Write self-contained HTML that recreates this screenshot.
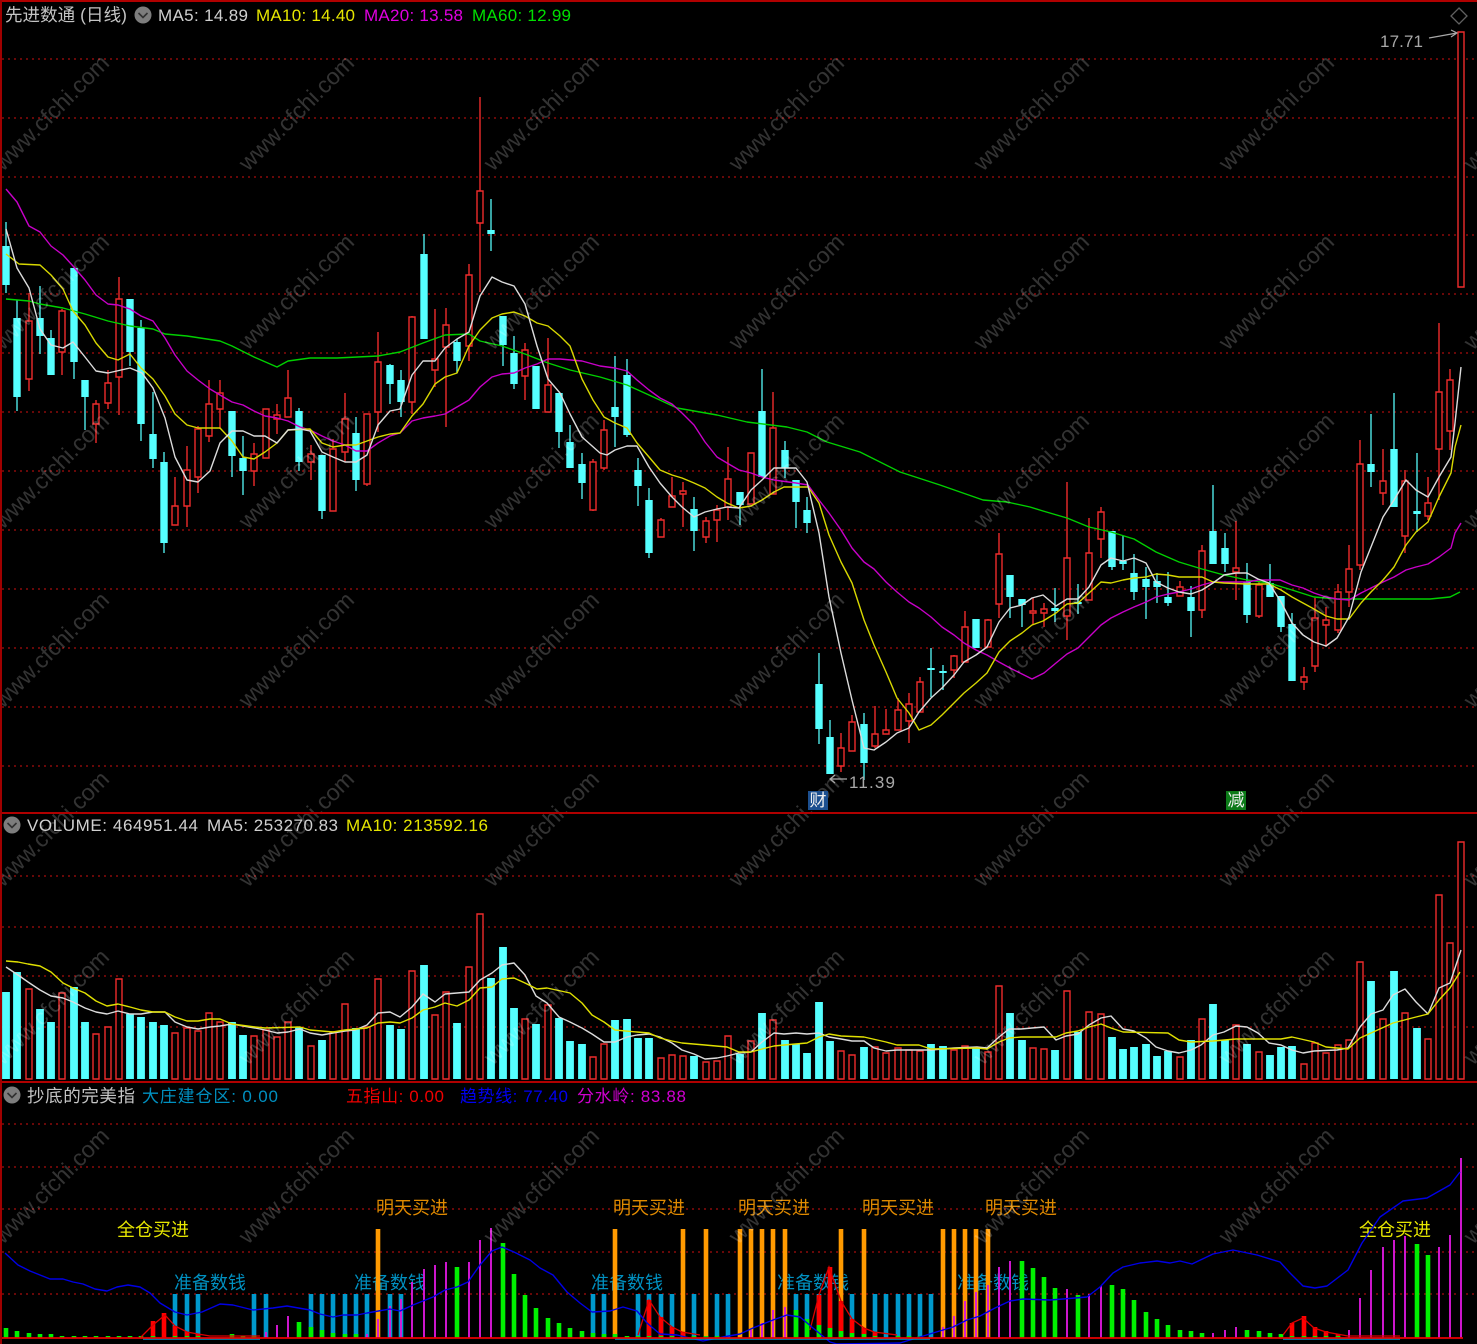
<!DOCTYPE html>
<html><head><meta charset="utf-8"><title>先进数通</title>
<style>html,body{margin:0;padding:0;background:#000;width:1477px;height:1344px;overflow:hidden}svg{display:block}
text{font-family:"Liberation Sans","Noto Sans CJK SC",sans-serif}
.g{stroke:#8a0a0a;stroke-width:1.4;stroke-dasharray:2 4;fill:none}
.l{fill:none;stroke-linejoin:round;stroke-width:1.4}
.wm text{font-size:23px;fill:rgba(255,255,255,.2)}
</style></head><body>
<svg width="1477" height="1344" viewBox="0 0 1477 1344" xmlns="http://www.w3.org/2000/svg">
<rect width="1477" height="1344" fill="#000"/>
<path class="g" d="M2 59H1477M2 118H1477M2 177H1477M2 235H1477M2 294H1477M2 353H1477M2 412H1477M2 471H1477M2 530H1477M2 589H1477M2 648H1477M2 707H1477M2 766H1477M2 876H1477M2 927H1477M2 976H1477M2 1027H1477M2 1124H1477M2 1167H1477M2 1209H1477M2 1252H1477M2 1294H1477"/>

<!-- cyan candles -->
<path fill="none" stroke="#4fe8e8" stroke-width="1.4" d="M6 222V293M17 300V411M40 286V354M51 330V375M74 268V379M85 380V430M130 299V366M141 320V441M153 392V468M164 452V553M232 411V477M243 436V495M299 408V471M322 455V519M356 417V491M390 364V404M401 370V417M424 234V339M457 339V373M491 199V251M503 316V366M514 336V389M536 366V409M559 393V448M570 425V468M582 453V499M615 356V447M627 359V437M638 458V506M649 488V558M694 497V551M740 492V525M762 369V477M785 441V478M796 480V528M807 497V533M819 653V744M830 720V774M864 713V780M931 648V697M943 665V690M976 619V648M1010 575V618M1022 599V627M1055 588V622M1078 584V614M1112 531V570M1123 536V570M1134 554V600M1146 567V619M1157 573V603M1168 572V606M1191 586V637M1213 485V564M1225 533V572M1247 563V623M1270 564V597M1281 596V632M1292 613V681M1371 414V487M1394 393V507M1417 453V532"/>
<path fill="none" stroke="#55ffff" stroke-width="7.4" d="M6 246V285M17 318V397M40 318V336M51 338V375M74 268V362M85 380V397M130 299V352M141 328V424M153 434V459M164 462V543M232 411V456M243 458V471M299 411V462M322 455V511M356 433V480M390 365V384M401 380V402M424 254V339M457 342V361M491 230V234M503 316V345M514 353V384M536 366V409M559 393V432M570 442V468M582 464V483M615 407V417M627 375V435M638 470V486M649 500V553M694 509V531M740 492V505M762 411V477M785 450V468M796 480V502M807 510V523M819 684V729M830 737V774M864 724V763M931 668V670M943 671V673M976 619V648M1010 575V597M1022 599V605M1055 608V611M1078 602V604M1112 531V567M1123 561V564M1134 573V592M1146 579V587M1157 581V587M1168 597V603M1191 597V611M1213 531V564M1225 548V564M1247 582V615M1270 583V597M1281 596V627M1292 624V681M1371 464V472M1394 449V507M1417 511V514"/>
<!-- red candles -->
<path fill="none" stroke="#ee2c2c" stroke-width="1.4" d="M29 293V391M62 309V375M96 400V443M108 370V409M119 277V415M175 477V525M187 446V527M198 426V493M209 380V442M220 380V429M254 443V486M266 409V458M277 404V434M288 370V417M311 445V480M333 439V511M345 393V462M367 414V486M378 332V432M412 316V414M435 309V387M446 308V427M469 264V361M480 97V292M525 343V400M548 338V412M593 459V511M604 420V470M661 518V537M672 477V507M683 482V527M706 517V543M717 505V542M728 447V520M751 453V504M773 392V494M841 733V772M852 715V751M875 706V748M886 709V734M898 698V730M909 693V743M920 677V712M954 655V678M965 611V662M988 619V647M999 533V618M1033 598V625M1044 603V627M1067 482V640M1089 518V600M1101 507V558M1180 581V596M1202 545V618M1236 521V600M1259 582V618M1304 667V690M1315 598V672M1326 607V647M1338 584V633M1349 545V607M1360 440V570M1383 449V505M1405 470V553M1428 477V520M1439 323V500M1450 369V450M1461 32V287"/>
<path fill="#000" stroke="#ee2c2c" stroke-width="1.4" d="M29 321m-3 0h6V379h-6zM62 311m-3 0h6V352h-6zM96 404m-3 0h6V424h-6zM108 383m-3 0h6V403h-6zM119 299m-3 0h6V377h-6zM175 506m-3 0h6V525h-6zM187 470m-3 0h6V506h-6zM198 429m-3 0h6V477h-6zM209 404m-3 0h6V436h-6zM220 393m-3 0h6V409h-6zM254 454m-3 0h6V471h-6zM266 409m-3 0h6V458h-6zM277 415m-3 0h6V419h-6zM288 398m-3 0h6V417h-6zM311 454m-3 0h6V462h-6zM333 449m-3 0h6V511h-6zM345 419m-3 0h6V452h-6zM367 414m-3 0h6V484h-6zM378 362m-3 0h6V412h-6zM412 317m-3 0h6V402h-6zM435 359m-3 0h6V370h-6zM446 325m-3 0h6V347h-6zM469 275m-3 0h6V346h-6zM480 191m-3 0h6V223h-6zM525 350m-3 0h6V376h-6zM548 385m-3 0h6V412h-6zM593 462m-3 0h6V510h-6zM604 430m-3 0h6V468h-6zM661 520m-3 0h6V537h-6zM672 496m-3 0h6V507h-6zM683 491m-3 0h6V494h-6zM706 521m-3 0h6V537h-6zM717 510m-3 0h6V520h-6zM728 479m-3 0h6V507h-6zM751 453m-3 0h6V504h-6zM773 428m-3 0h6V494h-6zM841 748m-3 0h6V766h-6zM852 722m-3 0h6V751h-6zM875 734m-3 0h6V746h-6zM886 730m-3 0h6V734h-6zM898 710m-3 0h6V730h-6zM909 704m-3 0h6V721h-6zM920 682m-3 0h6V712h-6zM954 656m-3 0h6V670h-6zM965 627m-3 0h6V662h-6zM988 620m-3 0h6V647h-6zM999 554m-3 0h6V604h-6zM1033 611m-3 0h6V613h-6zM1044 609m-3 0h6V613h-6zM1067 558m-3 0h6V616h-6zM1089 553m-3 0h6V600h-6zM1101 512m-3 0h6V539h-6zM1180 587m-3 0h6V596h-6zM1202 551m-3 0h6V610h-6zM1236 568m-3 0h6V572h-6zM1259 585m-3 0h6V616h-6zM1304 677m-3 0h6V682h-6zM1315 618m-3 0h6V666h-6zM1326 620m-3 0h6V625h-6zM1338 592m-3 0h6V630h-6zM1349 569m-3 0h6V592h-6zM1360 464m-3 0h6V565h-6zM1383 481m-3 0h6V493h-6zM1405 481m-3 0h6V536h-6zM1428 503m-3 0h6V516h-6zM1439 392m-3 0h6V449h-6zM1450 380m-3 0h6V431h-6zM1461 32m-3 0h6V287h-6z"/>

<!-- MA lines main -->
<polyline class="l" stroke="#00d000" points="6,299 29,301 40,304 63,308 85,314 108,321 130,326 153,329 165,334 187,336 220,341 232,346 254,357 277,367 288,361 310,358 337,358 378,356 400,352 423,343 445,335 469,334 480,341 502,346 525,354 548,363 570,370 600,377 627,385 649,395 677,408 717,415 747,422 787,427 807,432 827,442 860,452 900,472 940,485 983,500 1007,502 1030,507 1043,511 1067,518 1089,527 1111,532 1134,539 1156,552 1179,562 1202,569 1224,575 1247,580 1269,583 1292,590 1314,597 1337,599 1430,599 1450,597 1460,592"/>
<polyline class="l" stroke="#c800c8" points="6,189 17,202 29,226 40,232 51,246 63,255 73,266 85,280 96,295 108,304 118,305 130,309 141,316 153,321 165,338 175,355 187,371 198,380 210,389 220,395 232,402 243,405 254,411 265,416 277,418 288,421 300,427 310,430 322,436 333,441 345,445 356,451 367,451 378,443 390,436 400,433 412,421 423,418 435,416 445,414 457,407 469,400 480,387 492,377 502,374 514,373 525,368 537,364 548,359 560,359 582,361 600,366 615,368 627,371 637,380 649,390 660,398 672,404 682,413 694,425 705,442 717,457 727,463 739,470 751,473 762,477 774,480 796,483 808,485 819,500 829,513 841,530 852,548 864,562 874,569 886,582 897,592 909,602 919,608 931,617 942,627 954,635 964,643 976,650 987,655 999,662 1010,668 1022,674 1032,679 1044,673 1056,663 1067,654 1078,648 1089,637 1101,625 1111,618 1123,612 1134,607 1146,602 1156,597 1168,594 1179,592 1191,589 1202,585 1213,582 1224,582 1247,582 1258,580 1280,580 1292,585 1303,588 1314,593 1326,597 1337,599 1349,600 1361,593 1371,588 1383,582 1394,577 1406,570 1416,567 1428,564 1439,557 1451,548 1455,533 1461,523"/>
<polyline class="l" stroke="#d8d800" points="6,254 19,264 40,265 51,275 63,289 73,311 85,325 96,343 108,357 118,360 130,354 141,368 153,379 165,396 175,414 187,425 198,428 220,428 232,441 243,457 254,459 265,452 277,443 288,430 310,429 322,443 333,447 345,445 356,445 367,441 378,437 390,434 400,433 412,416 423,404 435,384 445,377 457,373 469,346 480,330 492,318 502,314 514,312 525,316 537,323 548,326 560,336 570,346 582,379 593,400 604,417 615,423 627,428 637,443 649,457 660,470 672,475 682,478 694,483 705,488 717,497 727,503 739,508 751,506 762,500 774,492 784,487 796,487 808,487 819,503 829,535 841,562 852,583 864,620 874,645 886,672 897,698 909,713 919,730 931,725 942,715 954,703 964,693 976,683 987,673 999,652 1010,641 1022,633 1032,625 1043,621 1056,613 1067,604 1078,603 1089,593 1101,582 1111,583 1123,580 1134,578 1146,577 1156,574 1168,575 1179,577 1202,577 1213,582 1224,583 1247,584 1269,584 1281,590 1292,597 1303,603 1314,609 1326,616 1337,619 1349,619 1361,603 1371,592 1383,580 1394,567 1406,545 1416,532 1428,522 1439,497 1451,473 1455,447 1461,425"/>
<polyline class="l" stroke="#dcdcdc" points="6,229 17,268 29,288 40,329 51,345 63,348 73,342 85,357 96,371 108,373 130,368 142,373 153,388 165,418 175,457 187,480 198,482 210,471 220,443 232,431 243,431 254,436 265,436 277,443 288,430 300,429 310,431 322,452 333,457 345,462 356,462 367,455 378,425 390,411 400,409 412,375 423,361 435,361 445,348 457,339 469,332 480,296 492,277 502,282 514,286 525,304 537,346 548,379 560,393 570,414 582,437 600,453 607,455 615,450 627,446 637,446 649,467 660,483 672,497 682,507 694,517 705,512 717,509 727,507 739,508 751,490 762,480 774,468 784,468 796,468 807,482 819,533 829,597 841,653 852,700 864,748 874,750 886,742 897,733 909,728 919,712 931,698 942,688 954,675 964,662 976,655 987,647 999,622 1010,608 1022,605 1032,598 1043,595 1056,606 1067,599 1078,599 1089,587 1101,565 1111,558 1123,561 1134,558 1146,563 1156,582 1168,588 1179,592 1191,594 1202,590 1213,583 1224,575 1236,573 1247,573 1258,579 1269,583 1281,602 1292,623 1303,635 1314,642 1326,646 1337,638 1349,617 1361,572 1371,547 1383,517 1394,500 1406,480 1416,490 1428,497 1439,477 1451,457 1455,423 1461,367"/>

<!-- Volume bars -->
<path fill="none" stroke="#55ffff" stroke-width="7.8" d="M6 992V1079M17 972V1079M40 1009V1079M51 1022V1079M74 987V1079M85 1022V1079M130 1014V1079M141 1017V1079M153 1022V1079M164 1025V1079M232 1022V1079M243 1035V1079M299 1027V1079M322 1040V1079M356 1028V1079M390 1025V1079M401 1029V1079M424 965V1079M457 1023V1079M491 978V1079M503 947V1079M514 1008V1079M536 1024V1079M559 1018V1079M570 1041V1079M582 1044V1079M615 1020V1079M627 1019V1079M638 1038V1079M649 1038V1079M694 1056V1079M740 1054V1079M762 1013V1079M785 1040V1079M796 1044V1079M807 1053V1079M819 1002V1079M830 1041V1079M864 1047V1079M931 1044V1079M943 1046V1079M976 1047V1079M1010 1013V1079M1022 1040V1079M1055 1050V1079M1078 1032V1079M1112 1037V1079M1123 1049V1079M1134 1047V1079M1146 1044V1079M1157 1056V1079M1168 1051V1079M1191 1040V1079M1213 1004V1079M1225 1040V1079M1247 1044V1079M1270 1055V1079M1281 1047V1079M1292 1046V1079M1371 981V1079M1394 971V1079M1417 1028V1079"/>
<path fill="#000" stroke="#ee2c2c" stroke-width="1.4" d="M29 989m-3 0h6V1079h-6zM62 993m-3 0h6V1079h-6zM96 1034m-3 0h6V1079h-6zM108 1027m-3 0h6V1079h-6zM119 979m-3 0h6V1079h-6zM175 1033m-3 0h6V1079h-6zM187 1028m-3 0h6V1079h-6zM198 1031m-3 0h6V1079h-6zM209 1013m-3 0h6V1079h-6zM220 1022m-3 0h6V1079h-6zM254 1036m-3 0h6V1079h-6zM266 1030m-3 0h6V1079h-6zM277 1037m-3 0h6V1079h-6zM288 1022m-3 0h6V1079h-6zM311 1046m-3 0h6V1079h-6zM333 1032m-3 0h6V1079h-6zM345 1004m-3 0h6V1079h-6zM367 1027m-3 0h6V1079h-6zM378 979m-3 0h6V1079h-6zM412 971m-3 0h6V1079h-6zM435 1015m-3 0h6V1079h-6zM446 992m-3 0h6V1079h-6zM469 967m-3 0h6V1079h-6zM480 914m-3 0h6V1079h-6zM525 1019m-3 0h6V1079h-6zM548 1005m-3 0h6V1079h-6zM593 1057m-3 0h6V1079h-6zM604 1044m-3 0h6V1079h-6zM661 1058m-3 0h6V1079h-6zM672 1055m-3 0h6V1079h-6zM683 1056m-3 0h6V1079h-6zM706 1062m-3 0h6V1079h-6zM717 1061m-3 0h6V1079h-6zM728 1036m-3 0h6V1079h-6zM751 1041m-3 0h6V1079h-6zM773 1020m-3 0h6V1079h-6zM841 1051m-3 0h6V1079h-6zM852 1055m-3 0h6V1079h-6zM875 1047m-3 0h6V1079h-6zM886 1053m-3 0h6V1079h-6zM898 1048m-3 0h6V1079h-6zM909 1050m-3 0h6V1079h-6zM920 1051m-3 0h6V1079h-6zM954 1050m-3 0h6V1079h-6zM965 1046m-3 0h6V1079h-6zM988 1052m-3 0h6V1079h-6zM999 986m-3 0h6V1079h-6zM1033 1048m-3 0h6V1079h-6zM1044 1049m-3 0h6V1079h-6zM1067 991m-3 0h6V1079h-6zM1089 1012m-3 0h6V1079h-6zM1101 1014m-3 0h6V1079h-6zM1180 1057m-3 0h6V1079h-6zM1202 1019m-3 0h6V1079h-6zM1236 1025m-3 0h6V1079h-6zM1259 1052m-3 0h6V1079h-6zM1304 1064m-3 0h6V1079h-6zM1315 1043m-3 0h6V1079h-6zM1326 1053m-3 0h6V1079h-6zM1338 1045m-3 0h6V1079h-6zM1349 1040m-3 0h6V1079h-6zM1360 962m-3 0h6V1079h-6zM1383 1019m-3 0h6V1079h-6zM1405 1013m-3 0h6V1079h-6zM1428 1039m-3 0h6V1079h-6zM1439 895m-3 0h6V1079h-6zM1450 943m-3 0h6V1079h-6zM1461 842m-3 0h6V1079h-6z"/>
<polyline class="l" stroke="#dcdcdc" points="6,967 18,975 28,982 40,990 51,996 63,998 73,1002 85,1008 96,1012 107,1014 118,1011 130,1014 141,1014 153,1012 165,1012 175,1022 187,1027 198,1029 210,1027 220,1026 232,1024 243,1026 255,1028 265,1030 277,1033 288,1032 300,1029 310,1033 322,1035 333,1033 345,1031 355,1030 367,1025 378,1013 390,1012 400,1017 412,1007 423,994 435,1002 445,994 457,993 469,992 480,980 492,973 502,965 514,963 525,975 536,996 547,1003 559,1017 570,1022 582,1028 592,1034 604,1042 615,1042 627,1037 637,1035 649,1034 660,1037 672,1043 682,1050 694,1054 705,1059 717,1058 727,1056 739,1053 751,1052 762,1042 774,1033 784,1034 796,1033 807,1034 819,1033 829,1037 841,1039 852,1041 864,1041 874,1048 886,1051 897,1050 909,1050 931,1050 954,1048 977,1047 987,1048 999,1037 1009,1029 1021,1029 1032,1028 1044,1027 1056,1040 1066,1036 1078,1034 1089,1025 1101,1018 1111,1016 1123,1029 1134,1031 1146,1038 1156,1047 1168,1051 1179,1053 1191,1050 1201,1045 1213,1035 1224,1032 1236,1026 1247,1027 1258,1033 1269,1043 1281,1045 1292,1050 1303,1053 1314,1051 1337,1050 1348,1048 1360,1027 1371,1014 1383,1010 1393,995 1405,989 1416,1002 1428,1014 1439,988 1450,983 1461,950"/>
<polyline class="l" stroke="#e0e000" points="6,961 18,962 28,964 40,966 51,972 63,983 73,988 85,993 96,1001 107,1006 118,1004 130,1007 141,1010 153,1012 165,1012 175,1017 187,1021 198,1021 210,1019 220,1019 232,1024 255,1027 265,1028 300,1027 310,1030 333,1032 345,1030 367,1028 378,1023 390,1022 400,1023 412,1018 423,1010 435,1007 445,1003 457,1006 469,1000 480,988 492,987 502,979 514,978 525,983 537,989 547,988 570,993 582,1003 592,1015 604,1022 615,1030 637,1032 649,1033 660,1038 672,1041 682,1043 705,1045 727,1047 739,1052 751,1052 762,1049 774,1046 784,1045 807,1043 819,1037 829,1034 841,1036 864,1037 886,1042 897,1045 919,1045 931,1049 977,1048 987,1049 999,1042 1009,1038 1021,1037 1056,1037 1066,1033 1078,1031 1089,1027 1101,1024 1111,1028 1123,1032 1168,1033 1179,1040 1191,1042 1213,1041 1236,1039 1281,1039 1292,1037 1314,1042 1326,1047 1348,1049 1360,1038 1371,1033 1393,1023 1416,1017 1428,1014 1439,1000 1450,988 1460,972"/>

<!-- Indicator labels -->
<g font-size="18">
<text x="117" y="1236" fill="#e6e600" textLength="72">全仓买进</text>
<text x="1359" y="1236" fill="#e6e600" textLength="72">全仓买进</text>
<text x="376" y="1214" fill="#e08a00" textLength="72">明天买进</text>
<text x="613" y="1214" fill="#e08a00" textLength="72">明天买进</text>
<text x="738" y="1214" fill="#e08a00" textLength="72">明天买进</text>
<text x="862" y="1214" fill="#e08a00" textLength="72">明天买进</text>
<text x="985" y="1214" fill="#e08a00" textLength="72">明天买进</text>
<text x="174" y="1289" fill="#0090c0" textLength="72">准备数钱</text>
<text x="354" y="1289" fill="#0090c0" textLength="72">准备数钱</text>
<text x="591" y="1289" fill="#0090c0" textLength="72">准备数钱</text>
<text x="777" y="1289" fill="#0090c0" textLength="72">准备数钱</text>
<text x="957" y="1289" fill="#0090c0" textLength="72">准备数钱</text>
</g>
<!-- Indicator bars -->
<path fill="none" stroke="#0099cc" stroke-width="4.6" d="M175 1294V1338M187 1294V1338M198 1294V1338M254 1294V1338M266 1294V1338M311 1294V1338M322 1294V1338M333 1294V1338M345 1294V1338M356 1294V1338M367 1294V1338M390 1294V1338M401 1294V1338M593 1294V1338M604 1294V1338M638 1294V1338M649 1294V1338M661 1294V1338M672 1294V1338M694 1294V1338M717 1294V1338M728 1294V1338M796 1294V1338M807 1294V1338M819 1294V1338M830 1294V1338M852 1294V1338M875 1294V1338M886 1294V1338M898 1294V1338M909 1294V1338M920 1294V1338M931 1294V1338"/>
<path fill="none" stroke="#ff9a00" stroke-width="4.6" d="M378 1229V1338M615 1229V1338M683 1229V1338M706 1229V1338M740 1229V1338M751 1229V1338M762 1229V1338M773 1229V1338M785 1229V1338M841 1229V1338M864 1229V1338M943 1229V1338M954 1229V1338M965 1229V1338M976 1229V1338M988 1229V1338"/>
<path fill="none" stroke="#d818d8" stroke-width="1.9" d="M266 1332V1338M277 1325V1338M288 1316V1338M367 1334V1338M378 1319V1338M390 1306V1338M401 1299V1338M412 1282V1338M424 1269V1338M435 1265V1338M446 1262V1338M469 1262V1338M480 1240V1338M491 1228V1338M751 1330V1338M762 1323V1338M773 1310V1338M785 1307V1338M943 1327V1338M954 1316V1338M965 1301V1338M976 1292V1338M988 1285V1338M999 1267V1338M1010 1261V1338M1067 1289V1338M1089 1294V1338M1101 1286V1338M1213 1333V1338M1225 1330V1338M1236 1327V1338M1349 1330V1338M1360 1298V1338M1371 1270V1338M1383 1247V1338M1394 1240V1338M1405 1236V1338M1439 1247V1338M1450 1235V1338M1461 1158V1338"/>
<path fill="none" stroke="#ff0000" stroke-width="4.6" d="M153 1321V1338M164 1313V1338M175 1326V1338M187 1332V1338M198 1334V1338M649 1300V1338M661 1317V1338M672 1327V1338M683 1332V1338M819 1295V1338M830 1267V1338M841 1301V1338M852 1319V1338M864 1328V1338M875 1332V1338M1292 1323V1338M1304 1316V1338M1315 1327V1338M1326 1331V1338M1338 1334V1338"/>
<path fill="none" stroke="#00f000" stroke-width="4.6" d="M6 1328V1338M17 1331V1338M29 1333V1338M40 1334V1338M51 1334V1338M62 1336V1338M74 1336V1338M85 1336V1338M96 1336V1338M108 1336V1338M119 1336V1338M130 1336V1338M141 1336V1338M153 1336V1338M175 1336V1338M187 1336V1338M198 1336V1338M232 1334V1338M243 1336V1338M254 1336V1338M299 1322V1338M311 1327V1338M322 1330V1338M333 1333V1338M345 1334V1338M356 1334V1338M457 1267V1338M503 1243V1338M514 1274V1338M525 1295V1338M536 1308V1338M548 1318V1338M559 1323V1338M570 1328V1338M582 1331V1338M593 1333V1338M604 1334V1338M615 1334V1338M627 1336V1338M638 1336V1338M649 1336V1338M661 1336V1338M672 1336V1338M683 1336V1338M694 1336V1338M706 1336V1338M717 1336V1338M796 1310V1338M807 1319V1338M819 1325V1338M830 1328V1338M841 1331V1338M852 1333V1338M864 1334V1338M875 1336V1338M898 1336V1338M909 1336V1338M920 1336V1338M1022 1261V1338M1033 1268V1338M1044 1277V1338M1055 1288V1338M1078 1295V1338M1112 1285V1338M1123 1289V1338M1134 1300V1338M1146 1312V1338M1157 1319V1338M1168 1325V1338M1180 1330V1338M1191 1331V1338M1202 1333V1338M1247 1330V1338M1259 1331V1338M1270 1333V1338M1281 1334V1338M1292 1336V1338M1304 1336V1338M1315 1336V1338M1326 1336V1338M1338 1336V1338M1417 1244V1338M1428 1255V1338"/>
<path fill="none" stroke="#dd0000" stroke-width="1.3" d="M141 1337L153 1325L165 1315L175 1326L187 1332L198 1334L210 1336H260M638 1335L649 1300L660 1317L672 1327L682 1332L700 1335M810 1330L819 1295L829 1267L841 1301L852 1319L864 1328L874 1332L897 1335M1283 1335L1292 1323L1303 1318L1314 1328L1326 1332L1337 1334L1348 1336H1400"/>
<polyline class="l" stroke="#0000e6" points="5,1253 18,1265 30,1271 50,1279 63,1279 73,1282 83,1284 95,1289 107,1291 117,1287 128,1285 140,1287 150,1293 160,1303 175,1312 187,1315 202,1312 220,1304 233,1305 253,1310 273,1308 287,1306 310,1310 320,1314 333,1317 343,1315 357,1315 367,1313 390,1309 400,1311 413,1305 433,1297 445,1290 457,1287 468,1282 480,1265 492,1251 502,1247 514,1252 530,1260 540,1268 553,1275 567,1292 580,1303 592,1312 610,1311 623,1307 637,1311 647,1323 660,1334 677,1335 703,1341 723,1337 740,1334 753,1328 773,1320 787,1315 800,1317 813,1328 830,1342 837,1344 900,1343 920,1337 933,1333 953,1327 967,1320 980,1316 995,1308 1010,1301 1023,1299 1050,1300 1063,1299 1087,1297 1100,1287 1113,1273 1123,1267 1140,1263 1157,1261 1170,1263 1180,1261 1192,1264 1213,1254 1233,1250 1257,1255 1280,1262 1290,1273 1303,1286 1315,1288 1327,1286 1348,1270 1362,1243 1380,1217 1403,1201 1427,1198 1450,1185 1460,1172"/>
<path fill="none" stroke="#0099cc" stroke-width="1.4" d="M143 1339H260M615 1339H930M1283 1339H1400"/>
<path fill="none" stroke="#e80000" stroke-width="1.8" d="M2 1338H1463"/>

<!-- Watermark -->
<g class="wm">
<text transform="translate(3,172) rotate(-45)">www.cfchi.com</text><text transform="translate(248,172) rotate(-45)">www.cfchi.com</text><text transform="translate(493,172) rotate(-45)">www.cfchi.com</text><text transform="translate(738,172) rotate(-45)">www.cfchi.com</text><text transform="translate(983,172) rotate(-45)">www.cfchi.com</text><text transform="translate(1228,172) rotate(-45)">www.cfchi.com</text><text transform="translate(1473,172) rotate(-45)">www.cfchi.com</text>
<text transform="translate(3,351) rotate(-45)">www.cfchi.com</text><text transform="translate(248,351) rotate(-45)">www.cfchi.com</text><text transform="translate(493,351) rotate(-45)">www.cfchi.com</text><text transform="translate(738,351) rotate(-45)">www.cfchi.com</text><text transform="translate(983,351) rotate(-45)">www.cfchi.com</text><text transform="translate(1228,351) rotate(-45)">www.cfchi.com</text><text transform="translate(1473,351) rotate(-45)">www.cfchi.com</text>
<text transform="translate(3,530) rotate(-45)">www.cfchi.com</text><text transform="translate(248,530) rotate(-45)">www.cfchi.com</text><text transform="translate(493,530) rotate(-45)">www.cfchi.com</text><text transform="translate(738,530) rotate(-45)">www.cfchi.com</text><text transform="translate(983,530) rotate(-45)">www.cfchi.com</text><text transform="translate(1228,530) rotate(-45)">www.cfchi.com</text><text transform="translate(1473,530) rotate(-45)">www.cfchi.com</text>
<text transform="translate(3,709) rotate(-45)">www.cfchi.com</text><text transform="translate(248,709) rotate(-45)">www.cfchi.com</text><text transform="translate(493,709) rotate(-45)">www.cfchi.com</text><text transform="translate(738,709) rotate(-45)">www.cfchi.com</text><text transform="translate(983,709) rotate(-45)">www.cfchi.com</text><text transform="translate(1228,709) rotate(-45)">www.cfchi.com</text><text transform="translate(1473,709) rotate(-45)">www.cfchi.com</text>
<text transform="translate(3,888) rotate(-45)">www.cfchi.com</text><text transform="translate(248,888) rotate(-45)">www.cfchi.com</text><text transform="translate(493,888) rotate(-45)">www.cfchi.com</text><text transform="translate(738,888) rotate(-45)">www.cfchi.com</text><text transform="translate(983,888) rotate(-45)">www.cfchi.com</text><text transform="translate(1228,888) rotate(-45)">www.cfchi.com</text><text transform="translate(1473,888) rotate(-45)">www.cfchi.com</text>
<text transform="translate(3,1066) rotate(-45)">www.cfchi.com</text><text transform="translate(248,1066) rotate(-45)">www.cfchi.com</text><text transform="translate(493,1066) rotate(-45)">www.cfchi.com</text><text transform="translate(738,1066) rotate(-45)">www.cfchi.com</text><text transform="translate(983,1066) rotate(-45)">www.cfchi.com</text><text transform="translate(1228,1066) rotate(-45)">www.cfchi.com</text><text transform="translate(1473,1066) rotate(-45)">www.cfchi.com</text>
<text transform="translate(3,1245) rotate(-45)">www.cfchi.com</text><text transform="translate(248,1245) rotate(-45)">www.cfchi.com</text><text transform="translate(493,1245) rotate(-45)">www.cfchi.com</text><text transform="translate(738,1245) rotate(-45)">www.cfchi.com</text><text transform="translate(983,1245) rotate(-45)">www.cfchi.com</text><text transform="translate(1228,1245) rotate(-45)">www.cfchi.com</text><text transform="translate(1473,1245) rotate(-45)">www.cfchi.com</text>
</g>

<!-- Borders -->
<path fill="none" stroke="#b00000" stroke-width="2" d="M0 1H1477M0 813H1477M0 1082H1477"/>
<path fill="none" stroke="#a00000" stroke-width="2" d="M1 0V1344"/>

<!-- Headers -->
<g font-size="17">
<text x="5" y="21" fill="#c4c4c4" textLength="122" font-size="17.5">先进数通 (日线)</text>
<text x="158" y="21" fill="#d0d0d0" textLength="90">MA5: 14.89</text>
<text x="256" y="21" fill="#e6e600" textLength="99">MA10: 14.40</text>
<text x="364" y="21" fill="#e000e0" textLength="99">MA20: 13.58</text>
<text x="472" y="21" fill="#00e000" textLength="99">MA60: 12.99</text>
<text x="27" y="831" fill="#d0d0d0" textLength="171">VOLUME: 464951.44</text>
<text x="207" y="831" fill="#d0d0d0" textLength="131">MA5: 253270.83</text>
<text x="346" y="831" fill="#e6e600" textLength="142">MA10: 213592.16</text>
<text x="27" y="1102" fill="#c4c4c4" textLength="108" font-size="17.5">抄底的完美指</text>
<text x="142" y="1102" fill="#0090c0" textLength="136">大庄建仓区: 0.00</text>
<text x="346" y="1102" fill="#f00000" textLength="98">五指山: 0.00</text>
<text x="460" y="1102" fill="#0000f0" textLength="108">趋势线: 77.40</text>
<text x="577" y="1102" fill="#d000d0" textLength="109">分水岭: 83.88</text>
</g>
<g>
<circle cx="143" cy="15" r="8.5" fill="#7d7d7d"/><path d="M138.5 13L143 17.5L147.5 13" fill="none" stroke="#303030" stroke-width="1.6"/>
<circle cx="12" cy="825" r="8.5" fill="#7d7d7d"/><path d="M7.5 823L12 827.5L16.5 823" fill="none" stroke="#303030" stroke-width="1.6"/>
<circle cx="12" cy="1095" r="8.5" fill="#7d7d7d"/><path d="M7.5 1093L12 1097.5L16.5 1093" fill="none" stroke="#303030" stroke-width="1.6"/>
</g>

<!-- Annotations -->
<text x="1380" y="47" font-size="17" fill="#a8a8a8" textLength="43">17.71</text>
<path d="M1429 38L1457 33M1451 30L1457 33L1451 37" fill="none" stroke="#a8a8a8" stroke-width="1.2"/>
<path d="M1459 8L1467 16L1459 24L1451 16Z" fill="none" stroke="#606060" stroke-width="1.3"/>
<text x="849" y="788" font-size="17" fill="#a8a8a8" textLength="46">11.39</text>
<path d="M830 779H847M835 775L830 779L835 783" fill="none" stroke="#a8a8a8" stroke-width="1.2"/>
<rect x="808" y="791" width="20" height="19" fill="#1c4f8f"/>
<text x="818" y="806" font-size="17" fill="#f0f0f0" text-anchor="middle">财</text>
<rect x="1226" y="791" width="20" height="19" fill="#0c7a18"/>
<text x="1236" y="806" font-size="17" fill="#f0f0f0" text-anchor="middle">减</text>
</svg>
</body></html>
